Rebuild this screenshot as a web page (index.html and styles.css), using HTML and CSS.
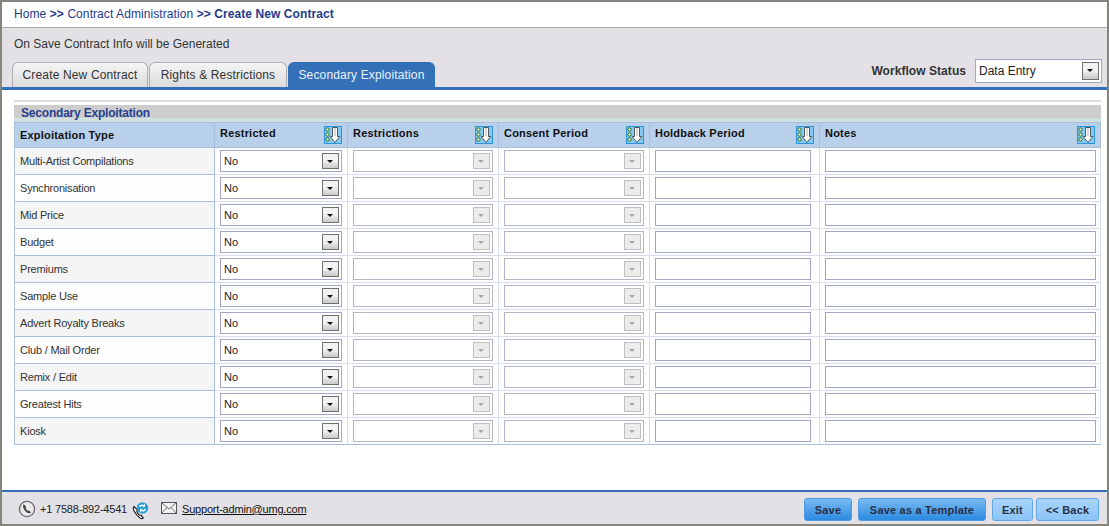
FILE: index.html
```html
<!DOCTYPE html>
<html lang="en">
<head>
  <meta charset="UTF-8" />
  <title>Create New Contract</title>
  <link rel="stylesheet" href="styles.css">
</head>
<body>
  <div class="page">
    <div class="breadcrumb">
      <a>Home</a> <b>&gt;&gt;</b> <a>Contract Administration</a> <b>&gt;&gt; Create New Contract</b>
    </div>

    <div class="top-panel">
      <p class="save-note">On Save Contract Info will be Generated</p>
      <div class="tab-row">
        <div class="tabs">
          <div class="tab tab-create">Create New Contract</div>
          <div class="tab tab-rights">Rights &amp; Restrictions</div>
          <div class="tab tab-secondary active">Secondary Exploitation</div>
        </div>
        <div class="workflow">
          <label>Workflow Status</label>
          <div class="select workflow-select">Data Entry<span class="select-btn"></span></div>
        </div>
      </div>
    </div>

    <div class="content">
      <div class="section-title"><span>Secondary Exploitation</span></div>
      <table class="grid">
        <thead>
          <tr>
            <th class="col-type">Exploitation Type</th>
            <th class="col-restricted"><div class="th-inner">Restricted<svg class="fill-icon"><use href="#fill-down"/></svg></div></th>
            <th class="col-restrictions"><div class="th-inner">Restrictions<svg class="fill-icon"><use href="#fill-down"/></svg></div></th>
            <th class="col-consent"><div class="th-inner">Consent Period<svg class="fill-icon"><use href="#fill-down"/></svg></div></th>
            <th class="col-holdback"><div class="th-inner">Holdback Period<svg class="fill-icon"><use href="#fill-down"/></svg></div></th>
            <th><div class="th-inner">Notes<svg class="fill-icon"><use href="#fill-down"/></svg></div></th>
          </tr>
        </thead>
        <tbody>
          <tr><td class="type">Multi-Artist Compilations</td><td><div class="select">No<span class="select-btn"></span></div></td><td><div class="select disabled"><span class="select-btn"></span></div></td><td><div class="select disabled"><span class="select-btn"></span></div></td><td><div class="text-box holdback"></div></td><td><div class="text-box notes"></div></td></tr>
          <tr><td class="type">Synchronisation</td><td><div class="select">No<span class="select-btn"></span></div></td><td><div class="select disabled"><span class="select-btn"></span></div></td><td><div class="select disabled"><span class="select-btn"></span></div></td><td><div class="text-box holdback"></div></td><td><div class="text-box notes"></div></td></tr>
          <tr><td class="type">Mid Price</td><td><div class="select">No<span class="select-btn"></span></div></td><td><div class="select disabled"><span class="select-btn"></span></div></td><td><div class="select disabled"><span class="select-btn"></span></div></td><td><div class="text-box holdback"></div></td><td><div class="text-box notes"></div></td></tr>
          <tr><td class="type">Budget</td><td><div class="select">No<span class="select-btn"></span></div></td><td><div class="select disabled"><span class="select-btn"></span></div></td><td><div class="select disabled"><span class="select-btn"></span></div></td><td><div class="text-box holdback"></div></td><td><div class="text-box notes"></div></td></tr>
          <tr><td class="type">Premiums</td><td><div class="select">No<span class="select-btn"></span></div></td><td><div class="select disabled"><span class="select-btn"></span></div></td><td><div class="select disabled"><span class="select-btn"></span></div></td><td><div class="text-box holdback"></div></td><td><div class="text-box notes"></div></td></tr>
          <tr><td class="type">Sample Use</td><td><div class="select">No<span class="select-btn"></span></div></td><td><div class="select disabled"><span class="select-btn"></span></div></td><td><div class="select disabled"><span class="select-btn"></span></div></td><td><div class="text-box holdback"></div></td><td><div class="text-box notes"></div></td></tr>
          <tr><td class="type">Advert Royalty Breaks</td><td><div class="select">No<span class="select-btn"></span></div></td><td><div class="select disabled"><span class="select-btn"></span></div></td><td><div class="select disabled"><span class="select-btn"></span></div></td><td><div class="text-box holdback"></div></td><td><div class="text-box notes"></div></td></tr>
          <tr><td class="type">Club / Mail Order</td><td><div class="select">No<span class="select-btn"></span></div></td><td><div class="select disabled"><span class="select-btn"></span></div></td><td><div class="select disabled"><span class="select-btn"></span></div></td><td><div class="text-box holdback"></div></td><td><div class="text-box notes"></div></td></tr>
          <tr><td class="type">Remix / Edit</td><td><div class="select">No<span class="select-btn"></span></div></td><td><div class="select disabled"><span class="select-btn"></span></div></td><td><div class="select disabled"><span class="select-btn"></span></div></td><td><div class="text-box holdback"></div></td><td><div class="text-box notes"></div></td></tr>
          <tr><td class="type">Greatest Hits</td><td><div class="select">No<span class="select-btn"></span></div></td><td><div class="select disabled"><span class="select-btn"></span></div></td><td><div class="select disabled"><span class="select-btn"></span></div></td><td><div class="text-box holdback"></div></td><td><div class="text-box notes"></div></td></tr>
          <tr><td class="type">Kiosk</td><td><div class="select">No<span class="select-btn"></span></div></td><td><div class="select disabled"><span class="select-btn"></span></div></td><td><div class="select disabled"><span class="select-btn"></span></div></td><td><div class="text-box holdback"></div></td><td><div class="text-box notes"></div></td></tr>
        </tbody>
      </table>
    </div>

    <div class="footer">
      <div class="contact">
        <svg class="icon-phone" width="18" height="18" viewBox="0 0 18 18">
          <circle cx="9" cy="9" r="7.6" fill="#eceaec" stroke="#6f6f6f" stroke-width="1.4"/>
          <path d="M5.800 4.200c-1 .8-1 2.300-.3 4 .8 2 2.500 3.900 4.400 4.800 1.300.6 2.400.4 3.100-.4l-2-2.200c-.5.300-1 .4-1.500.1-.8-.6-1.500-1.500-1.800-2.500-.1-.5.1-.9.5-1.200z" fill="#444"/>
        </svg>
        <span class="phone">+1 7588-892-4541</span>
        <svg class="icon-transfer" width="18" height="18" viewBox="0 0 18 18">
          <path d="M2.200 4.500c-1.200 1-1 2.800 0 4.800 1.200 2.300 3.400 5 5.800 6.700 1.300.8 2.600.7 3.300-.1l-2.400-2.800c-.6.300-1.100.2-1.700-.2-1-.9-1.900-2.200-2.300-3.400-.1-.6.100-1 .6-1.300z" fill="#fff" stroke="#222" stroke-width="1.200"/>
          <circle cx="10.500" cy="6" r="5.800" fill="#2a9fd0"/>
          <path d="M7.500 5c.5-1.600 2.500-2.300 4-1.500M13.500 7c-.5 1.600-2.500 2.300-4 1.500" fill="none" stroke="#fff" stroke-width="1.300"/>
          <path d="M13 1.500v3.200h-3zM8 10.500V7.300h3z" fill="#fff"/>
        </svg>
        <svg class="icon-mail" width="16" height="12" viewBox="0 0 16 12">
          <rect x=".5" y=".5" width="15" height="11" fill="#f2f1f3" stroke="#555"/>
          <path d="M.5.500 8 7l7.500-6.500M.5 11.500l5.500-6M15.500 11.500l-5.500-6" fill="none" stroke="#555" stroke-width=".8"/>
        </svg>
        <a class="mail-link">Support-admin@umg.com</a>
      </div>
      <div class="actions">
        <button class="btn primary btn-save">Save</button>
        <button class="btn primary btn-template">Save as a Template</button>
        <button class="btn btn-exit">Exit</button>
        <button class="btn btn-back">&lt;&lt; Back</button>
      </div>
    </div>
  </div>

  <svg width="0" height="0" class="defs">
    <symbol id="fill-down" viewBox="0 0 18 18">
      <rect x=".5" y=".5" width="17" height="17" fill="#86c9f5" stroke="#2b95dc"/>
      <circle cx="3.500" cy="3.500" r="1.700" fill="#dff0c8" stroke="#226e22" stroke-width="1"/>
      <circle cx="3.500" cy="8.500" r="1.700" fill="#dff0c8" stroke="#226e22" stroke-width="1"/>
      <circle cx="3.500" cy="13.500" r="1.700" fill="#dff0c8" stroke="#226e22" stroke-width="1"/>
      <path d="M8.500 1.500v9H6.200l4.800 6 4.800-6h-2.300v-9z" fill="#fff" stroke="#333" stroke-width=".8"/>
      <path d="M11 2v8" stroke="#8a8a8a" stroke-width=".7"/>
    </symbol>
  </svg>
</body>
</html>
```

FILE: styles.css
```css
html, body {
  margin: 0;
  padding: 0;
  width: 100%;
  height: 100%;
  overflow: hidden;
  font-family: "Liberation Sans", Arial, sans-serif;
  font-size: 12px;
  color: #222;
}

.page {
  box-sizing: border-box;
  width: 1109px;
  height: 526px;
  border: 2px solid #85857d;
  display: flex;
  flex-direction: column;
  background: #fff;
}

.breadcrumb {
  height: 25px;
  line-height: 24px;
  padding-left: 12px;
  color: #233a8b;
  letter-spacing: .08px;
  border-bottom: 1px solid #a9a9a5;
  flex: none;
}

.top-panel {
  height: 62px;
  flex: none;
  background: #e3e1e5;
  display: flex;
  flex-direction: column;
  justify-content: space-between;
}

.save-note {
  margin: 0;
  padding: 9px 0 0 12px;
  line-height: 14px;
  color: #333;
}

.tab-row {
  display: flex;
  justify-content: space-between;
  align-items: flex-end;
  border-bottom: 3px solid #3470b8;
  padding-left: 10px;
}

.tabs {
  display: flex;
  gap: 1px;
}

.tab {
  box-sizing: border-box;
  height: 25px;
  line-height: 24px;
  text-align: center;
  letter-spacing: .15px;
  border: 1px solid #b0aeb0;
  border-bottom: none;
  border-radius: 6px 6px 0 0;
  background: linear-gradient(#f4f4f4, #dddcdc);
  color: #333;
}

.tab-create { width: 136px; }
.tab-rights { width: 138px; }
.tab-secondary { width: 147px; }

.tab.active {
  background: #3470b8;
  border-color: #3470b8;
  color: #eaf0fa;
}

.workflow {
  display: flex;
  align-items: center;
  gap: 9px;
  padding: 0 5px 4px 0;
}

.workflow label {
  font-weight: bold;
  letter-spacing: .05px;
  color: #333;
}

.select, .text-box {
  box-sizing: border-box;
  height: 22px;
  background: #fff;
  border: 1px solid #a5a5c3;
  position: relative;
}

.select {
  line-height: 20px;
  padding-left: 3px;
  font-size: 11px;
  color: #222;
}

.workflow-select {
  width: 127px;
  height: 24px;
  line-height: 22px;
  font-size: 12px;
}

.select-btn {
  position: absolute;
  top: 2px;
  right: 2px;
  width: 15px;
  height: 14px;
  border: 1px solid #707070;
  background: linear-gradient(#f2f2f2 45%, #c9c9c9);
}

.select-btn::after {
  content: "";
  position: absolute;
  left: 4px;
  top: 6px;
  border: 3.500px solid transparent;
  border-top-color: #111;
  border-bottom: none;
}

.workflow-select .select-btn {
  height: 16px;
}

.select.disabled {
  border-color: #b5b5c5;
}

.select.disabled .select-btn {
  border-color: #c0c0c0;
  background: #ececec;
}

.select.disabled .select-btn::after {
  border-top-color: #a8a8a8;
}

.content {
  flex: 1;
  padding: 10px 6px 0 12px;
  background: #fff;
}

.section-title {
  box-sizing: border-box;
  height: 22px;
  border-top: 2px solid #dcdcdc;
  background: linear-gradient(#fff 3px, #cdcdcd 3px, #cdcdcd 16px, #cfe0e2 16px);
}

.section-title span {
  display: block;
  padding: 3px 0 0 7px;
  line-height: 17px;
  font-weight: bold;
  letter-spacing: -.2px;
  color: #27408f;
}

.grid {
  width: 1087px;
  border-collapse: collapse;
  table-layout: fixed;
  font-size: 11px;
}

.grid th, .grid td {
  border: 1px solid #a9bfdb;
  padding: 0 5px;
}

.grid th {
  height: 24px;
  background: #b9d0ea;
  color: #111;
  text-align: left;
  font-size: 11px;
  letter-spacing: .2px;
}

.col-type { width: 189px; }
.col-restricted { width: 122px; }
.col-restrictions, .col-consent { width: 140px; }
.col-holdback { width: 159px; }

.th-inner {
  display: flex;
  justify-content: space-between;
  padding-bottom: 4px;
  line-height: 14px;
}

.fill-icon {
  width: 18px;
  height: 18px;
  margin-bottom: -4px;
  flex: none;
}

.grid td {
  height: 26px;
  background: #fdfefd;
  border-color: #d3dfec;
}

.grid td.type {
  background: #f4f5f4;
  border-color: #a9bfdb;
  letter-spacing: -.2px;
  color: #333;
}

.grid tbody tr:nth-child(even) td.type {
  background: #fdfefd;
}

.grid tr:last-child td {
  border-bottom-color: #a9bfdb;
}

.text-box.holdback { width: 156px; }
.text-box.notes { margin-right: -1px; }

.footer {
  height: 32px;
  flex: none;
  background: #e3e1e5;
  border-top: 2px solid #3470b8;
  display: flex;
  justify-content: space-between;
  align-items: center;
}

.contact {
  display: flex;
  align-items: center;
  padding: 2px 0 0 16px;
  font-size: 11px;
  color: #222;
}

.phone {
  margin-left: 4px;
  letter-spacing: -.2px;
}

.icon-transfer { margin: 3px 0 0 5px; }
.icon-mail { margin: -2px 0 0 11px; }

.mail-link {
  margin-left: 5px;
  color: #111;
  letter-spacing: -.2px;
  text-decoration: underline;
}

.actions {
  display: flex;
  padding: 3px 8px 0 0;
}

.btn {
  height: 23px;
  padding: 0;
  border: 1px solid #60a8ea;
  border-radius: 3px;
  background: linear-gradient(#a9d5fb, #8ac4f6);
  color: #2a2f45;
  font-family: inherit;
  font-size: 11px;
  font-weight: bold;
  letter-spacing: .2px;
}

.btn.primary {
  background: linear-gradient(#79baf2, #2b8ae0);
  border-color: #4a9be4;
}

.btn-save { width: 48px; margin-right: 6px; }
.btn-template { width: 128px; margin-right: 6px; }
.btn-exit { width: 41px; margin-right: 3px; }
.btn-back { width: 63px; }

.defs {
  position: absolute;
}
```
